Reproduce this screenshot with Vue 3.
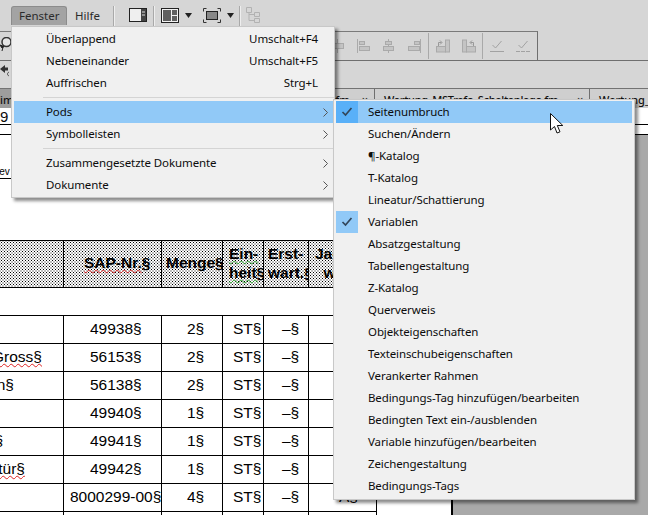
<script setup>
const menu = [
  { t: 'Überlappend', k: 'Umschalt+F4' },
  { t: 'Nebeneinander', k: 'Umschalt+F5' },
  { t: 'Auffrischen', k: 'Strg+L' },
  { sep: true },
  { t: 'Pods', sub: true, hot: true },
  { t: 'Symbolleisten', sub: true },
  { sep: true },
  { t: 'Zusammengesetzte Dokumente', sub: true },
  { t: 'Dokumente', sub: true }
]
const pods = [
  { t: 'Seitenumbruch', check: true, hot: true },
  { t: 'Suchen/Ändern' },
  { t: '¶-Katalog' },
  { t: 'T-Katalog' },
  { t: 'Lineatur/Schattierung' },
  { t: 'Variablen', check: true },
  { t: 'Absatzgestaltung' },
  { t: 'Tabellengestaltung' },
  { t: 'Z-Katalog' },
  { t: 'Querverweis' },
  { t: 'Objekteigenschaften' },
  { t: 'Texteinschubeigenschaften' },
  { t: 'Verankerter Rahmen' },
  { t: 'Bedingungs-Tag hinzufügen/bearbeiten' },
  { t: 'Bedingten Text ein-/ausblenden' },
  { t: 'Variable hinzufügen/bearbeiten' },
  { t: 'Zeichengestaltung' },
  { t: 'Bedingungs-Tags' }
]
const rows = [
  { a: '', n: '49938§', q: '2§' },
  { a: 'Gross§', w: true, n: '56153§', q: '2§' },
  { a: 'n§', n: '56138§', q: '2§' },
  { a: '', n: '49940§', q: '1§' },
  { a: '§', n: '49941§', q: '1§' },
  { a: 'tür§', w: true, n: '49942§', q: '1§' },
  { a: '', n: '8000299-00§', q: '4§', long: true, x: 'A§' },
  { a: '', n: '', q: '', u: true }
]
</script>

<template>
  <div class="app">
    <div class="bar1">
      <div class="mbtn">Fenster</div>
      <div class="mhelp">Hilfe</div>
      <i class="vsep first"></i>
      <svg class="i1" width="18" height="14" viewBox="0 0 18 14"><rect x=".5" y=".5" width="17" height="13" fill="#efefef" stroke="#222"/><rect x="12" y="1" width="5" height="12" fill="#444"/><path d="M13 4h3M13 7h3" stroke="#ddd"/></svg>
      <i class="vsep s2"></i>
      <svg class="i2" width="18" height="15" viewBox="0 0 18 15"><rect x=".5" y=".5" width="17" height="14" fill="#555" stroke="#222"/><rect x="1.500" y="1.500" width="15" height="12" fill="#606060" stroke="#f2f2f2"/><path d="M10.500 2v11M10.500 7.500H16" stroke="#f2f2f2"/></svg>
      <svg class="arr" width="7" height="5" viewBox="0 0 7 5"><path d="M0 0h7L3.500 5z" fill="#222"/></svg>
      <svg class="i3" width="18" height="15" viewBox="0 0 18 15"><path d="M.5 3.500v-3h3M14.500.5h3v3M17.500 11.500v3h-3M3.500 14.500h-3v-3" fill="none" stroke="#333"/><rect x="3.500" y="3.500" width="11" height="8" fill="#888" stroke="#222"/></svg>
      <svg class="arr" width="7" height="5" viewBox="0 0 7 5"><path d="M0 0h7L3.500 5z" fill="#222"/></svg>
      <i class="vsep s3"></i>
      <svg class="i4" width="14" height="16" viewBox="0 0 14 16"><path d="M.5.5h5v5h-5zM8.500 5.500h5v4h-5zM8.500 11.500h5v4h-5zM3 6v7.500h5.500M3 7.500h5.500" fill="none" stroke="#b2b2b2"/></svg>
    </div>

    <div class="bar2">
      <svg class="mag" width="12" height="14" viewBox="0 0 12 14"><circle cx="6.500" cy="5" r="4.500" fill="#e6e6e6" stroke="#333" stroke-width="1.500"/><path d="M0 8l4 1.500L2 11zM3 10l-1 4" stroke="#222" fill="#222"/></svg>
      <div class="dis">
        <svg width="14" height="14" viewBox="0 0 14 14"><path d="M7.500 0v14" stroke="#aaa"/><rect x="2.500" y="4.500" width="11" height="5" fill="#c4c4c4" stroke="#aaa"/></svg>
        <svg width="14" height="14" viewBox="0 0 14 14"><path d="M1.500 0v14" stroke="#aaa"/><rect x="3.500" y="2.500" width="5" height="3" fill="#c4c4c4" stroke="#aaa"/><rect x="3.500" y="7.500" width="10" height="4" fill="#c4c4c4" stroke="#aaa"/></svg>
        <svg width="14" height="14" viewBox="0 0 14 14"><path d="M6.500 0v14" stroke="#aaa"/><rect x="3.500" y="2.500" width="6" height="3" fill="#c4c4c4" stroke="#aaa"/><rect x="1.500" y="7.500" width="10" height="4" fill="#c4c4c4" stroke="#aaa"/></svg>
        <svg width="14" height="14" viewBox="0 0 14 14"><path d="M12.500 0v14" stroke="#aaa"/><rect x="6.500" y="2.500" width="5" height="3" fill="#c4c4c4" stroke="#aaa"/><rect x=".5" y="7.500" width="11" height="4" fill="#c4c4c4" stroke="#aaa"/></svg>
        <i class="dsep"></i>
        <svg width="14" height="14" viewBox="0 0 14 14"><rect x="9.500" y="1" width="4" height="12" fill="#c4c4c4" stroke="#aaa"/><rect x=".5" y="7.500" width="9" height="5.500" fill="#c4c4c4" stroke="#aaa"/><path d="M2.500 7V3.500h3M4 1.500l2 2-2 2" fill="none" stroke="#999"/></svg>
        <svg width="14" height="14" viewBox="0 0 14 14"><rect x=".5" y="1" width="4" height="12" fill="#c4c4c4" stroke="#aaa"/><rect x="4.500" y="7.500" width="9" height="5.500" fill="#c4c4c4" stroke="#aaa"/><path d="M11.500 7V3.500h-3M10 1.500l-2 2 2 2" fill="none" stroke="#999"/></svg>
        <i class="dsep"></i>
        <svg width="14" height="14" viewBox="0 0 14 14"><path d="M2.500 6l3 3 6-7M0 12.500h14" fill="none" stroke="#a2a2a2"/></svg>
        <svg width="14" height="14" viewBox="0 0 14 14"><path d="M2.500 6l3 3 6-7" fill="none" stroke="#a2a2a2"/><path d="M0 12.500h14" stroke="#a2a2a2" stroke-dasharray="4 1"/></svg>
      </div>
    </div>

    <div class="bar3">
      <svg width="11" height="12" viewBox="0 0 11 12"><path d="M0 4l5-4v2.500h3v3H5V8z" fill="#333"/><path d="M9 7c-2 1-2 3 0 4" fill="none" stroke="#444"/></svg>
    </div>

    <div class="tabs">
      <div class="tab t0"><span>im</span></div>
      <div class="tab t1"><span>fm</span><b>×</b></div>
      <div class="tab t2"><span>Wartung_MSTrafo_Schaltanlage.fm</span><b>×</b></div>
      <div class="tab t3"><span>Wartung_</span></div>
    </div>
    <div class="ruler r1"><span>9</span></div>
    <div class="ruler r2"></div>

    <div class="work">
      <div class="page">
        <div class="rev"><span>Rev</span></div>
        <div class="thead">
          <div></div>
          <div class="hc sap"><u class="red">SAP-Nr.</u>§</div>
          <div class="hc menge">Menge§</div>
          <div class="hc ein"><u class="grn">Ein-</u><br /><u class="grn">heit§</u></div>
          <div class="hc erst">Erst-<br />wart.§</div>
          <div class="hc ja">Ja-<br />&nbsp;&nbsp;w</div>
        </div>
        <div class="tbody">
          <div v-for="(r, i) in rows" :key="i" class="tr">
            <div class="td c0"><span :class="{ wav: r.w }">{{ r.a }}</span></div>
            <div class="td c1" :class="{ long: r.long }">{{ r.n }}</div>
            <div class="td c2">{{ r.q }}</div>
            <div class="td c3">{{ r.u ? '' : 'ST§' }}</div>
            <div class="td c4">{{ r.u ? '' : '–§' }}</div>
            <div class="td c5">{{ r.x }}</div>
          </div>
        </div>
      </div>
      <div class="pasteboard"></div>
    </div>

    <div class="menu m1">
      <template v-for="(m, i) in menu" :key="i">
        <div v-if="m.sep" class="sep"></div>
        <div v-else class="item" :class="{ hot: m.hot }">
          <span>{{ m.t }}</span>
          <span v-if="m.k" class="key">{{ m.k }}</span>
          <svg v-if="m.sub" class="chev" width="5" height="9" viewBox="0 0 5 9"><path d="M.5.5l4 4-4 4" fill="none" stroke="#555"/></svg>
        </div>
      </template>
    </div>

    <div class="menu m2">
      <div v-for="p in pods" :key="p.t" class="pod" :class="{ hot: p.hot }">
        <span class="box" :class="{ on: p.check }">
          <svg v-if="p.check" width="12" height="10" viewBox="0 0 12 10"><path d="M1.500 5l3 3 6-7" fill="none" stroke="#33465a" stroke-width="1.700"/></svg>
        </span>
        <span class="ptxt">{{ p.t }}</span>
      </div>
    </div>

    <svg class="cursor" width="14" height="21" viewBox="0 0 14 21"><path d="M.5.5v16.500l4-3.500 2.500 6.500 3-1.200-2.700-6.300h5.500z" fill="#fff" stroke="#111"/></svg>
  </div>
</template>

<style>
html, body { margin: 0; background: #d6d6d6; }
</style>

<style scoped>
.app {
  position: relative;
  width: 648px;
  height: 515px;
  overflow: hidden;
  display: flex;
  flex-direction: column;
  background: #d6d6d6;
  font-family: "Noto Sans", sans-serif;
  font-size: 11.500px;
  color: #0c0c0c;
}
.bar1 {
  height: 31px;
  flex: none;
  box-sizing: border-box;
  padding: 6px 0 0 11px;
  display: flex;
  align-items: flex-start;
}
.mbtn {
  width: 56px;
  height: 19px;
  box-sizing: border-box;
  background: #a3a3a3;
  border: 1px solid #8c8c8c;
  border-bottom: 0;
  border-radius: 3px 3px 0 0;
  padding: 1px 0 0 7px;
  color: #2b2b2b;
}
.mhelp { width: 46px; padding: 2px 0 0 8px; box-sizing: border-box; color: #2b2b2b; }
.vsep { width: 2px; height: 20px; background: #a9a9a9; border-right: 1px solid #eee; box-sizing: border-box; flex: none; }
.i1 { margin: 2px 0 0 14px; }
.vsep.s2 { margin-left: 6px; }
.i2 { margin: 2px 0 0 6px; }
.arr { margin: 7px 0 0 6px; }
.i3 { margin: 2px 0 0 11px; }
.vsep.s3 { margin-left: 5px; }
.i4 { margin: 1px 0 0 5px; }
.bar2 {
  height: 30px;
  flex: none;
  box-sizing: border-box;
  border-bottom: 1px solid #6f6f6f;
  width: 648px;
  position: relative;
}
.bar2 .dis {
  width: 538px;
  height: 29px;
  box-sizing: border-box;
  border-top: 1px solid #7a7a7a;
  border-right: 1px solid #6f6f6f;
  padding: 7px 7px 0 0;
  display: flex;
  justify-content: flex-end;
  align-items: flex-start;
  gap: 12px;
}
.dsep { width: 1px; height: 26px; margin: -6px -5px 0 -6px; background: #a9a9a9; flex: none; }
.mag { position: absolute; left: 0; top: 6px; }
.bar3 { height: 27px; flex: none; box-sizing: border-box; padding: 4px 0 0; }
.tabs {
  height: 20px;
  flex: none;
  box-sizing: border-box;
  border-top: 1px solid #737373;
  display: flex;
  background: #cfcfcf;
  color: #111;
  font-size: 11px;
  font-weight: 500;
}
.tab { box-sizing: border-box; display: flex; justify-content: space-between; padding: 3px 6px 0 9px; border-right: 1px solid #6f6f6f; white-space: nowrap; overflow: hidden; }
.tab b { font-weight: 400; }
.t0 { width: 40px; background: #9d9d9d; padding-left: 0; }
.t1 { width: 335px; justify-content: flex-end; gap: 12px; }
.t2 { width: 215px; letter-spacing: -.3px; }
.t3 { flex: 1; border-right: 0; }
.ruler { flex: none; box-sizing: border-box; background: #fff; border-bottom: 1px solid #000; }
.r1 { height: 17px; font: 15px "Liberation Sans", sans-serif; overflow: hidden; }
.r2 { height: 10px; }
.work { flex: 1; display: flex; min-height: 0; }
.page {
  width: 453px;
  box-sizing: border-box;
  background: #fff;
  border-right: 2px solid #000;
  padding-top: 105px;
  overflow: hidden;
  position: relative;
  font-family: "Liberation Sans", sans-serif;
  font-size: 15.500px;
  color: #000;
}
.pasteboard { flex: 1; background: #a9a9a9; }
.rev {
  position: absolute;
  left: 0;
  top: 30px;
  width: 11px;
  height: 13px;
  overflow: hidden;
  border-bottom: 1px solid #000;
  font-size: 10px;
  line-height: 13px;
}
.rev span { display: block; margin-left: -8px; }
.thead, .tr { display: grid; grid-template-columns: 64px 98px 61px 41px 45px 68px; width: 377px; }
.thead {
  height: 48px;
  box-sizing: border-box;
  border-top: 1px solid #000;
  border-bottom: 1px solid #000;
  background-color: #fff;
  background-image:
    radial-gradient(circle, #000 .65px, transparent .85px),
    radial-gradient(circle, #000 .65px, transparent .85px);
  background-size: 3px 3px;
  background-position: 0 0, 1.500px 1.500px;
  font-weight: 700;
  line-height: 19px;
}
.thead > div { border-right: 1px solid #000; box-sizing: border-box; overflow: hidden; white-space: nowrap; }
.hc { padding-top: 3px; }
.sap { padding: 12px 0 0 20px; }
.menge { padding: 12px 0 0 4px; }
.ein { padding-left: 6px; }
.erst { padding-left: 4px; }
.ja { padding-left: 6px; border-right: 0 !important; }
u { text-decoration-style: wavy; text-decoration-thickness: 1px; text-underline-offset: 1px; }
.red { text-decoration-color: #d22; }
.grn { text-decoration-color: #3a3; }
.wav { text-decoration: underline wavy #d22 1px; }
.tbody { margin-top: 27px; }
.tr { height: 28px; box-sizing: border-box; border-top: 1px solid #000; }
.td { border-right: 1px solid #000; box-sizing: border-box; line-height: 26px; white-space: nowrap; overflow: hidden; }
.c0 { display: flex; justify-content: flex-end; }
.c0 span { flex: none; }
.tr:nth-child(2) .c0 { padding-right: 21px; }
.tr:nth-child(3) .c0 { padding-right: 49px; }
.tr:nth-child(5) .c0 { padding-right: 60px; }
.tr:nth-child(6) .c0 { padding-right: 38px; }
.c1 { padding-left: 26px; }
.c1.long { padding-left: 6px; }
.c2 { padding-left: 25px; }
.c3 { padding-left: 10px; }
.c4 { padding-left: 18px; }
.c5 { padding-left: 30px; }
.menu {
  position: absolute;
  box-sizing: border-box;
  background: #f0f0f0;
  border: 1px solid #c8c8c8;
  box-shadow: 3px 3px 3px rgba(0, 0, 0, .45);
  letter-spacing: -.1px;
}
.m1 { left: 11px; top: 26px; width: 324px; height: 172px; padding: 1px 0 0 2px; }
.item {
  height: 22px;
  position: relative;
  display: flex;
  justify-content: space-between;
  align-items: center;
  padding: 0 16px 2px 32px;
  box-sizing: border-box;
  white-space: nowrap;
}
.item.hot, .pod.hot { background: #91c9f7; }
.sep { height: 1px; background: #d4d4d4; margin: 3px 0 3px 29px; }
.chev { position: absolute; right: 6px; top: 7px; }
.m2 { left: 333px; top: 99px; width: 302px; height: 401px; padding: 1px 2px; }
.pod { height: 22px; display: flex; align-items: center; white-space: nowrap; }
.box { width: 22px; height: 22px; display: flex; align-items: center; justify-content: center; flex: none; }
.box.on { background: #91c9f7; }
.hot .box.on { background: #59b0f8; }
.ptxt { margin: 0 0 2px 10px; }
.cursor { position: absolute; left: 550px; top: 113px; }
</style>
